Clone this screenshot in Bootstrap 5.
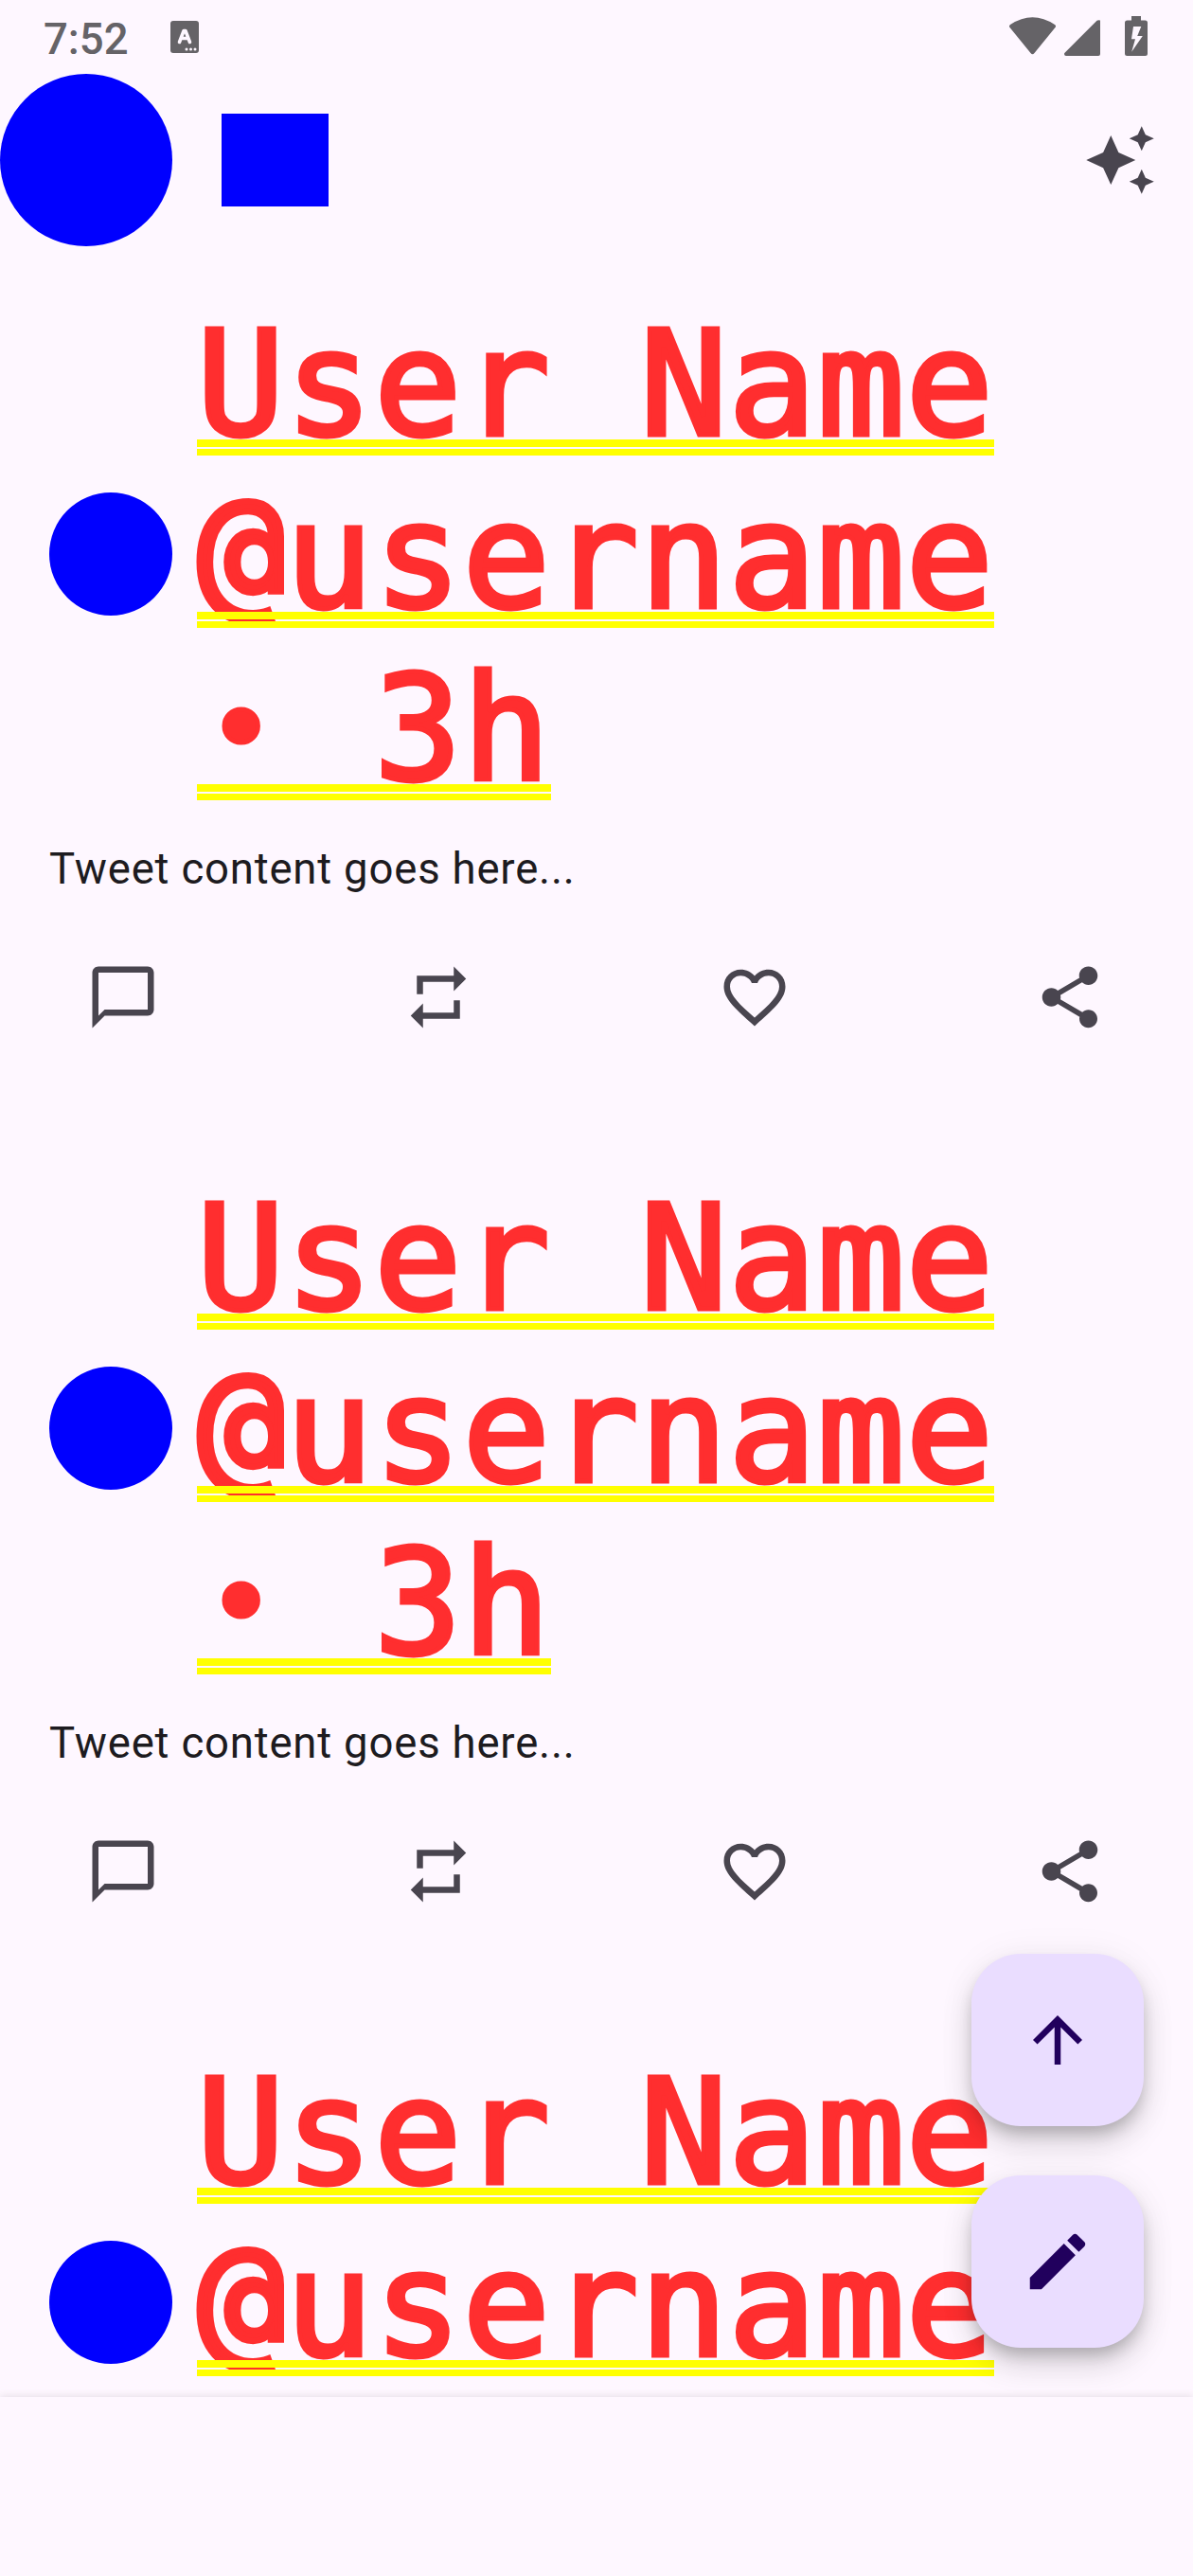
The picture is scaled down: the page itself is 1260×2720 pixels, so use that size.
<!DOCTYPE html>
<html lang="en">
<head>
<meta charset="utf-8">
<meta name="viewport" content="width=device-width, initial-scale=1">
<title>Feed</title>
<link href="https://cdn.jsdelivr.net/npm/bootstrap@5.3.0/dist/css/bootstrap.min.css" rel="stylesheet">
<style>
  body { background: #fef7ff; color: #1d1b20; font-family: Roboto, sans-serif; }
  svg { display: block; fill: currentColor; flex: none; }
  .screen { width: 1260px; height: 2720px; background: #fef7ff; }
  .status { height: 78px; color: #656367; padding-left: 46px; }
  .clock { font-size: 45.5px; font-weight: 500; line-height: 78px; padding-top: 3px; width: 133px; }
  .topbar { height: 182px; color: #49454f; padding-right: 38px; }
  .dot { background: #00f; border-radius: 50%; flex: none; }
  .dot-lg { width: 182px; height: 182px; }
  .dot-sm { width: 130px; height: 130px; margin-right: 26px; }
  .title-block { width: 113px; height: 98px; background: #00f; margin-left: 52px; }
  .feed { min-height: 0; }
  .post { padding: 52px; height: 923px; }
  .who { font-family: "DejaVu Sans Mono", monospace; font-size: 153px; letter-spacing: 1.49px; line-height: 182px; color: #ff2e2f; -webkit-text-stroke: 5px #ff2e2f; white-space: pre; }
  .who > span { display: block; width: max-content; height: 182px; padding-top: 2.5px; position: relative; }
  .who > span::after { content: ""; position: absolute; left: 0; right: 0; top: 151.7px; height: 17.6px; background: linear-gradient(#ff0 8px, transparent 8px 9.6px, #ff0 9.6px); }
  .who i { font-style: normal; display: inline-block; width: 93.6px; height: 120px; line-height: 120px; letter-spacing: 0; text-align: center; }
  .at-sign { vertical-align: 7px; -webkit-text-stroke-width: 6.5px; }
  .bullet { font-size: 122px; vertical-align: 11px; }
  .msg { font-size: 45.5px; line-height: 65px; letter-spacing: .8125px; margin: 27px 0 25px; }
  .act { width: 156px; height: 156px; padding: 39px; color: #49454f; border: 0; background: none; }
  .bottombar { height: 189px; background: #fef7ff; box-shadow: 0 -1px 8px rgba(0,0,0,.1); z-index: 1; }
  .fabs { right: 52px; bottom: 241px; gap: 52px; z-index: 2; }
  .fab { width: 182px; height: 182px; padding: 52px; border: 0; border-radius: 52px; background: #eaddff; color: #21005d;
         box-shadow: 0 10px 16px -3px rgba(0,0,0,.2), 0 19px 32px rgba(0,0,0,.13), 0 3px 42px rgba(0,0,0,.06); }
</style>
</head>
<body>
<svg class="d-none">
  <symbol id="i-chat" viewBox="0 0 24 24"><path d="M20 2H4c-1.1 0-2 .9-2 2v18l4-4h14c1.1 0 2-.9 2-2V4c0-1.1-.9-2-2-2zm0 14H6l-2 2V4h16v12z"/></symbol>
  <symbol id="i-repeat" viewBox="0 0 24 24"><path d="M7 7h10v3l4-4-4-4v3H5v6h2V7zm10 10H7v-3l-4 4 4 4v-3h12v-6h-2v4z"/></symbol>
  <symbol id="i-heart" viewBox="0 0 24 24"><path d="M16.5 3c-1.74 0-3.41.81-4.5 2.09C10.91 3.81 9.24 3 7.5 3 4.42 3 2 5.42 2 8.5c0 3.78 3.4 6.86 8.55 11.54L12 21.35l1.45-1.32C18.6 15.36 22 12.28 22 8.5 22 5.42 19.58 3 16.5 3zm-4.4 15.55l-.1.1-.1-.1C7.14 14.24 4 11.39 4 8.5 4 6.5 5.5 5 7.5 5c1.54 0 3.04.99 3.57 2.36h1.87C13.46 5.99 14.96 5 16.5 5c2 0 3.5 1.5 3.5 3.5 0 2.89-3.14 5.74-7.9 10.05z"/></symbol>
  <symbol id="i-share" viewBox="0 0 24 24"><path d="M18 16.08c-.76 0-1.44.3-1.96.77L8.91 12.7c.05-.23.09-.46.09-.7s-.04-.47-.09-.7l7.05-4.11c.54.5 1.25.81 2.04.81 1.66 0 3-1.34 3-3s-1.34-3-3-3-3 1.34-3 3c0 .24.04.47.09.7L8.04 9.81C7.5 9.31 6.79 9 6 9c-1.66 0-3 1.34-3 3s1.34 3 3 3c.79 0 1.5-.31 2.04-.81l7.12 4.16c-.05.21-.08.43-.08.65 0 1.61 1.31 2.92 2.92 2.92s2.92-1.31 2.92-2.92-1.31-2.92-2.92-2.92z"/></symbol>
</svg>

<div class="screen d-flex flex-column position-relative overflow-hidden">
  <div class="status d-flex align-items-start flex-shrink-0">
    <div class="clock">7:52</div>
    <svg width="32" height="78" viewBox="0 0 32 78"><rect x="1" y="22" width="30" height="34" rx="3"/>
      <path d="M10.500 44.500L15.100 32.500h1.800L21.500 44.500M12.500 40.500h7" fill="none" stroke="#fef7ff" stroke-width="3.600" stroke-linecap="round" stroke-linejoin="round"/>
      <g fill="#fef7ff"><circle cx="18" cy="52" r="1.500"/><circle cx="22.500" cy="52" r="1.500"/><circle cx="27" cy="52" r="1.500"/></g></svg>
    <svg class="ms-auto" width="194" height="78" viewBox="1066 0 194 78">
      <path d="M1066.500 29Q1065.200 27.500 1067 26Q1090.500 10.500 1114 26Q1115.800 27.500 1114.500 29L1092.500 56Q1090.500 58.500 1088.500 56Z"/>
      <path d="M1124.800 55.500L1158.500 21.800Q1160 20.700 1162 21.500V57Q1162 59 1160 59H1126Q1124 59 1124 57Q1124 56.300 1124.800 55.500Z"/>
      <path fill-rule="evenodd" d="M1195 17h10v4.500h4.500q2.500 0 2.500 2.500v32.500q0 2.500-2.500 2.500h-19q-2.500 0-2.500-2.500V24q0-2.500 2.500-2.500h4.500zM1197 28L1195 41.300h4l-3.800 13.400L1206.800 38h-5.600L1205.300 28z"/>
    </svg>
  </div>

  <header class="topbar d-flex align-items-center flex-shrink-0">
    <div class="dot dot-lg"></div>
    <div class="title-block"></div>
    <svg class="ms-auto" width="78" height="78" viewBox="0 0 24 24"><path d="M19 9l1.250-2.750L23 5l-2.750-1.250L19 1l-1.250 2.750L15 5l2.750 1.250L19 9zm-7.500.5L9 4 6.500 9.500 1 12l5.500 2.500L9 20l2.500-5.500L17 12l-5.500-2.500zM19 15l-1.250 2.750L15 19l2.750 1.250L19 23l1.250-2.750L23 19l-2.750-1.250L19 15z"/></svg>
  </header>

  <main class="feed flex-grow-1 overflow-hidden">
    <article class="post">
      <div class="d-flex align-items-center">
        <div class="dot dot-sm"></div>
        <div class="who"><span>User Name</span><span><i class="at-sign">@</i>username</span><span><i class="bullet">•</i> 3h</span></div>
      </div>
      <p class="msg">Tweet content goes here...</p>
      <div class="d-flex justify-content-between">
        <button class="act"><svg width="78" height="78"><use href="#i-chat"/></svg></button>
        <button class="act"><svg width="78" height="78"><use href="#i-repeat"/></svg></button>
        <button class="act"><svg width="78" height="78"><use href="#i-heart"/></svg></button>
        <button class="act"><svg width="78" height="78"><use href="#i-share"/></svg></button>
      </div>
    </article>
    <article class="post">
      <div class="d-flex align-items-center">
        <div class="dot dot-sm"></div>
        <div class="who"><span>User Name</span><span><i class="at-sign">@</i>username</span><span><i class="bullet">•</i> 3h</span></div>
      </div>
      <p class="msg">Tweet content goes here...</p>
      <div class="d-flex justify-content-between">
        <button class="act"><svg width="78" height="78"><use href="#i-chat"/></svg></button>
        <button class="act"><svg width="78" height="78"><use href="#i-repeat"/></svg></button>
        <button class="act"><svg width="78" height="78"><use href="#i-heart"/></svg></button>
        <button class="act"><svg width="78" height="78"><use href="#i-share"/></svg></button>
      </div>
    </article>
    <article class="post">
      <div class="d-flex align-items-center">
        <div class="dot dot-sm"></div>
        <div class="who"><span>User Name</span><span><i class="at-sign">@</i>username</span><span class="invisible">• 3h</span></div>
      </div>
    </article>
  </main>

  <footer class="bottombar flex-shrink-0 position-relative"></footer>

  <div class="fabs position-absolute d-flex flex-column">
    <button class="fab"><svg width="78" height="78" viewBox="0 0 24 24"><path d="M4 12l1.410 1.410L11 7.830V20h2V7.830l5.580 5.590L20 12l-8-8-8 8z"/></svg></button>
    <button class="fab"><svg width="78" height="78" viewBox="0 0 24 24"><path d="M3 17.250V21h3.750L17.810 9.940l-3.750-3.750L3 17.250zM20.710 7.040c.39-.39.39-1.020 0-1.410l-2.340-2.340c-.39-.39-1.020-.39-1.410 0l-1.830 1.830 3.750 3.750 1.830-1.830z"/></svg></button>
  </div>
</div>
<script src="https://cdn.jsdelivr.net/npm/bootstrap@5.3.0/dist/js/bootstrap.bundle.min.js"></script>
</body>
</html>
